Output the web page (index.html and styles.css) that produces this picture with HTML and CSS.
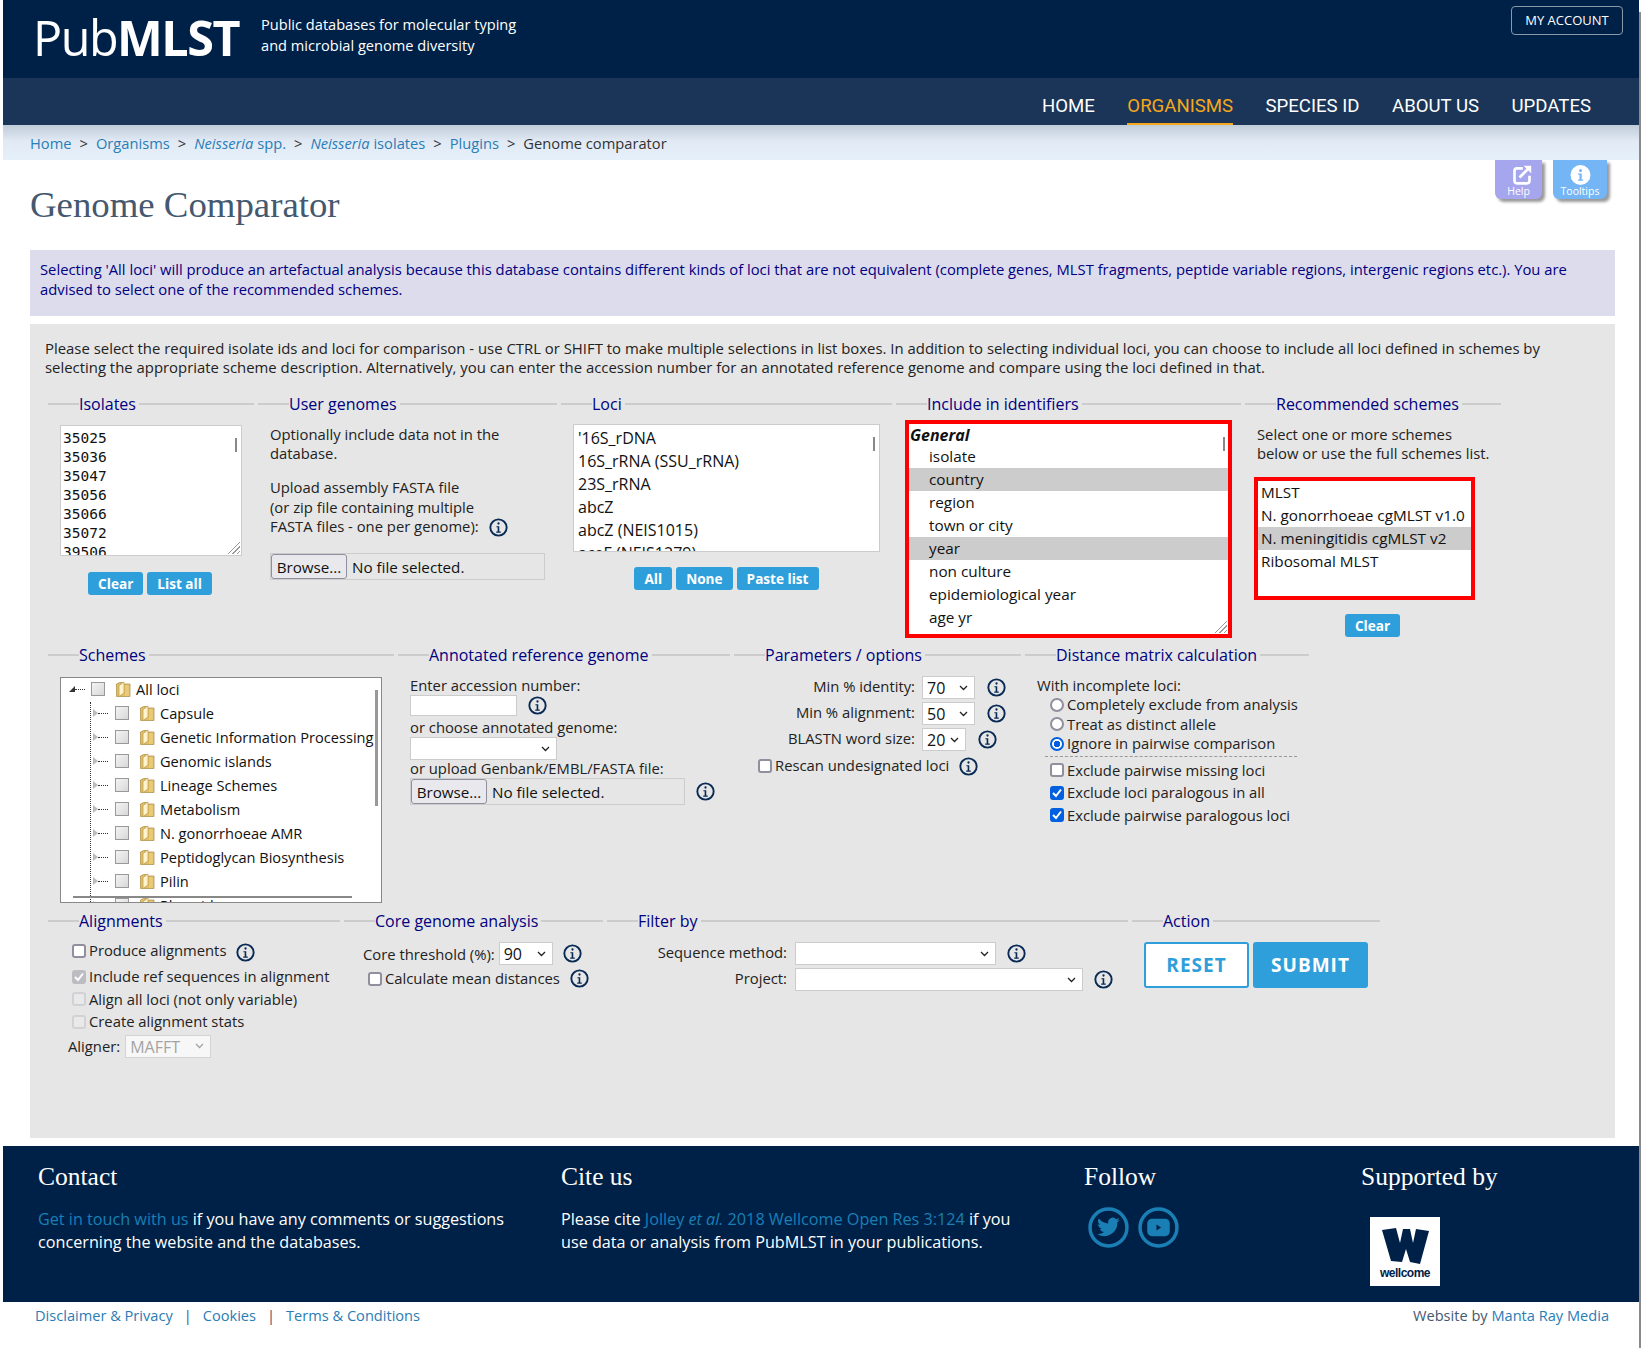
FILE: index.html
```html
<!doctype html>
<html lang="en">
  <head>
    <meta charset="UTF-8" />
    <title>PubMLST - Genome Comparator</title>
    <link rel="stylesheet" href="styles.css">
  </head>
  <body>
    <svg class="icon-defs" width="0" height="0">
      <symbol id="info" viewBox="0 0 20 20">
        <circle cx="10" cy="10" r="8.6" fill="none" stroke="currentColor" stroke-width="2" />
        <circle cx="10" cy="5.8" r="1.2" fill="currentColor" />
        <path d="M7.8 8.6h3v5.6h1.6v1.2H7.6v-1.2h1.5V9.8H7.8z" fill="currentColor" />
      </symbol>
      <symbol id="folder" viewBox="0 0 16 16">
        <path d="M1.5 15.5V3l3-1.5h3l1 1.5h6.5v12.5z" fill="#e3bd62" stroke="#a98c45" stroke-width=".7" />
        <path d="M4 15.5V4.5l5-3.5v11z" fill="#fdf3cf" stroke="#b89a50" stroke-width=".7" />
        <path d="M11 4v11M13 4v11" stroke="#f4dc9a" stroke-width=".8" />
      </symbol>
    </svg>

    <header class="site-header">
      <div class="brand">
        <div class="logo">Pub<b>MLST</b></div>
        <div class="tagline">Public databases for molecular typing<br>and microbial genome diversity</div>
        <a class="account-btn">MY ACCOUNT</a>
      </div>
      <nav class="main-nav">
        <a>HOME</a>
        <a class="active">ORGANISMS</a>
        <a>SPECIES ID</a>
        <a>ABOUT US</a>
        <a>UPDATES</a>
      </nav>
      <div class="breadcrumb">
        <a>Home</a><span class="sep">&gt;</span><a>Organisms</a><span class="sep">&gt;</span><a><i>Neisseria</i> spp.</a><span class="sep">&gt;</span><a><i>Neisseria</i> isolates</a><span class="sep">&gt;</span><a>Plugins</a><span class="sep">&gt;</span><span>Genome comparator</span>
      </div>
    </header>

    <main class="content">
      <div class="title-row">
        <h1>Genome Comparator</h1>
        <div class="page-tabs">
          <a class="page-tab help">
            <svg width="22" height="20" viewBox="0 0 24 24"><path d="M13 4H6a3 3 0 0 0-3 3v12a3 3 0 0 0 3 3h12a3 3 0 0 0 3-3v-6" fill="none" stroke="#fff" stroke-width="3.2" /><path d="M9 15 19 5" stroke="#fff" stroke-width="3.2" /><path d="M14 1h9v9z" fill="#fff" /></svg>
            Help
          </a>
          <a class="page-tab tips">
            <svg width="21" height="20" viewBox="0 0 20 20"><circle cx="10" cy="10" r="10" fill="#fff" /><circle cx="10" cy="5.4" r="1.5" fill="#73b5f5" /><path d="M7.6 8.4h3.6v6h1.4v1.3H7.6v-1.3h1.4V9.7H7.6z" fill="#73b5f5" /></svg>
            Tooltips
          </a>
        </div>
      </div>

      <div class="warn-box">Selecting 'All loci' will produce an artefactual analysis because this database contains different kinds of loci that are not equivalent (complete genes, MLST fragments, peptide variable regions, intergenic regions etc.). You are advised to select one of the recommended schemes.</div>

      <form class="panel">
        <p class="intro">Please select the required isolate ids and loci for comparison - use CTRL or SHIFT to make multiple selections in list boxes. In addition to selecting individual loci, you can choose to include all loci defined in schemes by selecting the appropriate scheme description. Alternatively, you can enter the accession number for an annotated reference genome and compare using the loci defined in that.</p>

        <div class="field-row row-one">
          <fieldset class="fs-isolates">
            <legend>Isolates</legend>
            <div class="listbox mono isolates-list">
              <div>35025</div><div>35036</div><div>35047</div><div>35056</div><div>35066</div><div>35072</div><div>39506</div>
              <span class="thumb"></span><span class="grip"></span>
            </div>
            <div class="btn-row">
              <button type="button" class="small-btn">Clear</button>
              <button type="button" class="small-btn">List all</button>
            </div>
          </fieldset>

          <fieldset class="fs-user">
            <legend>User genomes</legend>
            <p class="user-note">Optionally include data not in the<br>database.</p>
            <p class="user-upload">Upload assembly FASTA file<br>(or zip file containing multiple<br>FASTA files - one per genome): <svg class="info"><use href="#info" /></svg></p>
            <div class="file-box user-file"><button type="button">Browse...</button><span>No file selected.</span></div>
          </fieldset>

          <fieldset class="fs-loci">
            <legend>Loci</legend>
            <div class="listbox loci-list">
              <div>'16S_rDNA</div><div>16S_rRNA (SSU_rRNA)</div><div>23S_rRNA</div><div>abcZ</div><div>abcZ (NEIS1015)</div><div>aceF (NEIS1279)</div>
              <span class="thumb"></span>
            </div>
            <div class="btn-row">
              <button type="button" class="small-btn">All</button>
              <button type="button" class="small-btn">None</button>
              <button type="button" class="small-btn">Paste list</button>
            </div>
          </fieldset>

          <fieldset class="fs-include">
            <legend>Include in identifiers</legend>
            <div class="listbox red-box include-list">
              <div class="group">General</div>
              <div class="opt">isolate</div>
              <div class="opt picked">country</div>
              <div class="opt">region</div>
              <div class="opt">town or city</div>
              <div class="opt picked">year</div>
              <div class="opt">non culture</div>
              <div class="opt">epidemiological year</div>
              <div class="opt">age yr</div>
              <span class="thumb"></span><span class="grip"></span>
            </div>
          </fieldset>

          <fieldset class="fs-recommended">
            <legend>Recommended schemes</legend>
            <p class="rec-note">Select one or more schemes<br>below or use the full schemes list.</p>
            <div class="listbox red-box rec-list">
              <div>MLST</div>
              <div>N. gonorrhoeae cgMLST v1.0</div>
              <div class="picked">N. meningitidis cgMLST v2</div>
              <div>Ribosomal MLST</div>
            </div>
            <div class="btn-row rec-btns"><button type="button" class="small-btn">Clear</button></div>
          </fieldset>
        </div>

        <div class="field-row row-two">
          <fieldset class="fs-schemes">
            <legend>Schemes</legend>
            <div class="tree">
              <div class="tree-row root"><span class="tree-arrow open"></span><span class="dots"></span><span class="tree-check"></span><svg class="folder"><use href="#folder" /></svg>All loci</div>
              <div class="tree-row"><span class="tree-arrow"></span><span class="dots"></span><span class="tree-check"></span><svg class="folder"><use href="#folder" /></svg>Capsule</div>
              <div class="tree-row"><span class="tree-arrow"></span><span class="dots"></span><span class="tree-check"></span><svg class="folder"><use href="#folder" /></svg>Genetic Information Processing</div>
              <div class="tree-row"><span class="tree-arrow"></span><span class="dots"></span><span class="tree-check"></span><svg class="folder"><use href="#folder" /></svg>Genomic islands</div>
              <div class="tree-row"><span class="tree-arrow"></span><span class="dots"></span><span class="tree-check"></span><svg class="folder"><use href="#folder" /></svg>Lineage Schemes</div>
              <div class="tree-row"><span class="tree-arrow"></span><span class="dots"></span><span class="tree-check"></span><svg class="folder"><use href="#folder" /></svg>Metabolism</div>
              <div class="tree-row"><span class="tree-arrow"></span><span class="dots"></span><span class="tree-check"></span><svg class="folder"><use href="#folder" /></svg>N. gonorrhoeae AMR</div>
              <div class="tree-row"><span class="tree-arrow"></span><span class="dots"></span><span class="tree-check"></span><svg class="folder"><use href="#folder" /></svg>Peptidoglycan Biosynthesis</div>
              <div class="tree-row"><span class="tree-arrow"></span><span class="dots"></span><span class="tree-check"></span><svg class="folder"><use href="#folder" /></svg>Pilin</div>
              <div class="tree-row"><span class="tree-arrow"></span><span class="dots"></span><span class="tree-check"></span><svg class="folder"><use href="#folder" /></svg>Plasmid</div>
              <span class="tree-vline"></span><span class="tree-vbar"></span><span class="tree-hbar"></span>
            </div>
          </fieldset>

          <fieldset class="fs-annotated">
            <legend>Annotated reference genome</legend>
            <div class="ann-label ann-first">Enter accession number:</div>
            <div class="ann-line"><input type="text" class="accession"><svg class="info"><use href="#info" /></svg></div>
            <div class="ann-label ann-second">or choose annotated genome:</div>
            <select class="ann-select"><option></option></select>
            <div class="ann-label ann-third">or upload Genbank/EMBL/FASTA file:</div>
            <div class="ann-line"><div class="file-box ann-file"><button type="button">Browse...</button><span>No file selected.</span></div><svg class="info"><use href="#info" /></svg></div>
          </fieldset>

          <fieldset class="fs-params">
            <legend>Parameters / options</legend>
            <div class="param-row"><label>Min % identity:</label><select class="sel-wide"><option>70</option></select><svg class="info"><use href="#info" /></svg></div>
            <div class="param-row"><label>Min % alignment:</label><select class="sel-wide"><option>50</option></select><svg class="info"><use href="#info" /></svg></div>
            <div class="param-row"><label>BLASTN word size:</label><select class="sel-narrow"><option>20</option></select><svg class="info"><use href="#info" /></svg></div>
            <label class="check-line rescan"><input type="checkbox"> Rescan undesignated loci <svg class="info"><use href="#info" /></svg></label>
          </fieldset>

          <fieldset class="fs-distance">
            <legend>Distance matrix calculation</legend>
            <div class="dist-label">With incomplete loci:</div>
            <label class="radio-line"><input type="radio" name="inc"> Completely exclude from analysis</label>
            <label class="radio-line"><input type="radio" name="inc"> Treat as distinct allele</label>
            <label class="radio-line"><input type="radio" name="inc" checked> Ignore in pairwise comparison</label>
            <div class="dash"></div>
            <label class="check-line dist-check"><input type="checkbox"> Exclude pairwise missing loci</label>
            <label class="check-line dist-check"><input type="checkbox" checked> Exclude loci paralogous in all</label>
            <label class="check-line dist-check"><input type="checkbox" checked> Exclude pairwise paralogous loci</label>
          </fieldset>
        </div>

        <div class="field-row row-three">
          <fieldset class="fs-align">
            <legend>Alignments</legend>
            <label class="check-line al-first"><input type="checkbox"> Produce alignments <svg class="info"><use href="#info" /></svg></label>
            <label class="check-line al-item"><input type="checkbox" checked disabled> Include ref sequences in alignment</label>
            <label class="check-line al-item"><input type="checkbox" disabled> Align all loci (not only variable)</label>
            <label class="check-line al-item"><input type="checkbox" disabled> Create alignment stats</label>
            <div class="aligner"><label>Aligner:</label><select disabled><option>MAFFT</option></select></div>
          </fieldset>

          <fieldset class="fs-core">
            <legend>Core genome analysis</legend>
            <div class="core-line"><label>Core threshold (%):</label><select><option>90</option></select><svg class="info"><use href="#info" /></svg></div>
            <label class="check-line core-check"><input type="checkbox"> Calculate mean distances <svg class="info"><use href="#info" /></svg></label>
          </fieldset>

          <fieldset class="fs-filter">
            <legend>Filter by</legend>
            <div class="filter-row"><label>Sequence method:</label><select class="sel-method"><option></option></select><svg class="info"><use href="#info" /></svg></div>
            <div class="filter-row"><label>Project:</label><select class="sel-project"><option></option></select><svg class="info"><use href="#info" /></svg></div>
          </fieldset>

          <fieldset class="fs-action">
            <legend>Action</legend>
            <div class="action-btns">
              <button type="button" class="reset-btn">RESET</button>
              <button type="button" class="submit-btn">SUBMIT</button>
            </div>
          </fieldset>
        </div>
      </form>
    </main>

    <footer class="site-footer">
      <div class="foot-col contact">
        <h2>Contact</h2>
        <p><a>Get in touch with us</a> if you have any comments or suggestions concerning the website and the databases.</p>
      </div>
      <div class="foot-col cite">
        <h2>Cite us</h2>
        <p>Please cite <a>Jolley <i>et al.</i> 2018 Wellcome Open Res 3:124</a> if you use data or analysis from PubMLST in your publications.</p>
      </div>
      <div class="foot-col follow">
        <h2>Follow</h2>
        <div class="social">
          <svg width="41" height="41" viewBox="0 0 40 40"><circle cx="20" cy="20" r="18" fill="none" stroke="#1a7fb5" stroke-width="3.4" /><path d="M31 12.6a9 9 0 0 1-2.6.7 4.5 4.5 0 0 0 2-2.5 9 9 0 0 1-2.9 1.1 4.5 4.5 0 0 0-7.7 4.1 12.8 12.8 0 0 1-9.3-4.7 4.5 4.5 0 0 0 1.4 6 4.5 4.5 0 0 1-2-.6 4.5 4.5 0 0 0 3.6 4.5 4.5 4.5 0 0 1-2 .1 4.5 4.5 0 0 0 4.2 3.1A9 9 0 0 1 9 26.3a12.7 12.7 0 0 0 19.6-11.3 9 9 0 0 0 2.4-2.4z" fill="#1a7fb5" /></svg>
          <svg width="41" height="41" viewBox="0 0 40 40"><circle cx="20" cy="20" r="18" fill="none" stroke="#1a7fb5" stroke-width="3.4" /><rect x="9" y="11.5" width="22" height="17" rx="4.5" fill="#1a7fb5" /><path d="M18 17v6l4.5-3z" fill="#002147" /></svg>
        </div>
      </div>
      <div class="foot-col support">
        <h2>Supported by</h2>
        <div class="wellcome">
          <svg width="47" height="36" viewBox="0 0 47 36"><path d="M0 2 14 0 18 15 21 1 28 1 31 15 34 1 47 3 38 36 28 34 24 21 20 34 9 33z" fill="#002147" /></svg>
          <span>wellcome</span>
        </div>
      </div>
    </footer>

    <div class="bottom-bar">
      <div class="bottom-links"><a>Disclaimer &amp; Privacy</a><span>|</span><a>Cookies</a><span>|</span><a>Terms &amp; Conditions</a></div>
      <div class="credit">Website by <a>Manta Ray Media</a></div>
    </div>

    <span class="page-scroll"></span>
  </body>
</html>
```

FILE: styles.css
```css
* {
  box-sizing: border-box;
}

html {
  background: #fff;
}

body {
  margin: 0;
  padding: 0 5px 0 3px;
  position: relative;
  font-family: "Open Sans", "Noto Sans", sans-serif;
  font-size: 14px;
  color: #222;
  min-height: 1361px;
}

.icon-defs {
  position: absolute;
}

a {
  color: #2a7db5;
  text-decoration: none;
}

p {
  margin: 0;
}

/* header */
.site-header {
  background: #002147;
}

.brand {
  height: 78px;
  display: flex;
  align-items: flex-start;
  padding-left: 30px;
  color: #fff;
}

.logo {
  font-size: 48.5px;
  line-height: 74px;
  letter-spacing: -1.5px;
}

.logo b {
  font-weight: 700;
}

.tagline {
  margin: 14px 0 0 22px;
  font-size: 14.6px;
  line-height: 20.5px;
}

.account-btn {
  margin: 6px 16px 0 auto;
  width: 112px;
  height: 29px;
  border: 1px solid #8b98a8;
  border-radius: 4px;
  color: #fff;
  font-size: 13px;
  line-height: 27px;
  text-align: center;
}

.main-nav {
  height: 47px;
  background: #1a3557;
  display: flex;
  justify-content: flex-end;
  gap: 32.5px;
  padding-right: 48px;
}

.main-nav a {
  color: #fff;
  font-family: Roboto, sans-serif;
  font-size: 18.6px;
  line-height: 40px;
  padding-top: 8px;
}

.main-nav a.active {
  color: #f5a81c;
  border-bottom: 2px solid #f5a81c;
}

.breadcrumb {
  height: 35px;
  background: linear-gradient(#c0ccd8, #e0e9f4 45%, #e6f0fb);
  padding-left: 27px;
  font-size: 14.7px;
  line-height: 37px;
  color: #333;
}

.breadcrumb a {
  color: #2a7db5;
}

.sep {
  margin: 0 8px;
}

/* page */
.content {
  padding: 0 24px 0 27px;
}

.title-row {
  height: 90px;
  display: flex;
  justify-content: space-between;
}

h1 {
  margin: 0;
  padding-top: 22px;
  font-family: "Liberation Serif", serif;
  font-weight: 400;
  font-size: 36.8px;
  line-height: 46px;
  color: #44586f;
}

.page-tabs {
  display: flex;
  gap: 11px;
  margin-right: 8px;
}

.page-tab {
  height: 39px;
  border-radius: 0 0 6px 6px;
  box-shadow: 3px 3px 3px #999;
  color: #fff;
  font-size: 10.5px;
  line-height: 11px;
  text-align: center;
  display: flex;
  flex-direction: column;
  align-items: center;
}

.page-tab svg {
  display: block;
  margin: 5px 0 1px;
}

.page-tab.help {
  width: 47px;
  background: #a6a6ef;
}

.page-tab.help svg {
  margin-left: 6px;
}

.page-tab.tips {
  width: 54px;
  background: #73b5f5;
}

.warn-box {
  height: 66px;
  background: #dddcec;
  color: #000080;
  padding: 10px 10px 0;
  font-size: 14.8px;
  line-height: 19.5px;
}

.panel {
  margin-top: 8px;
  height: 814px;
  background: #e6e6e6;
  padding: 15px 15px 0 15px;
}

.intro {
  max-width: 1520px;
  font-size: 14.9px;
  line-height: 19px;
  color: #222;
}

.field-row {
  display: flex;
  align-items: flex-start;
  gap: 4px;
  margin-left: 3px;
}

fieldset {
  border: 0;
  border-top: 2px solid #ccc;
  margin: 0;
  padding: 0;
  min-width: 0;
  position: relative;
}

legend {
  margin-left: 31px;
  padding: 0 3px 0 0;
  font-size: 16px;
  line-height: 20px;
  color: #000080;
}

.row-one {
  margin-top: 17px;
  height: 251px;
}

.row-two {
  height: 266px;
}

.row-three {
  height: 200px;
}

.fs-isolates { width: 206px; }
.fs-user { width: 299px; }
.fs-loci { width: 331px; }
.fs-include { width: 345px; }
.fs-recommended { width: 256px; }
.fs-schemes { width: 346px; }
.fs-annotated { width: 332px; }
.fs-params { width: 287px; }
.fs-distance { width: 284px; }
.fs-align { width: 292px; }
.fs-core { width: 259px; }
.fs-filter { width: 521px; }
.fs-action { width: 248px; }

/* listboxes */
.listbox {
  position: relative;
  background: #fff;
  border: 1px solid #ccc;
  overflow: hidden;
  color: #111;
}

.thumb {
  position: absolute;
  top: 12px;
  right: 4px;
  width: 2px;
  height: 14px;
  background: #888;
}

.grip {
  position: absolute;
  right: 1px;
  bottom: 1px;
  width: 14px;
  height: 14px;
  background: repeating-linear-gradient(135deg, transparent 0 2px, #999 2px 3px);
  clip-path: polygon(100% 0, 100% 100%, 0 100%);
}

.mono {
  font-family: "DejaVu Sans Mono", monospace;
  font-size: 14.5px;
  line-height: 19px;
}

.isolates-list {
  margin: 11px 0 0 12px;
  width: 182px;
  height: 131px;
  padding: 3px 0 0 2px;
}

.btn-row {
  display: flex;
  gap: 4px;
  justify-content: center;
}

.small-btn {
  height: 23px;
  padding: 0 10px;
  border: 0;
  border-radius: 3px;
  background: #2f9fdb;
  color: #fff;
  font-family: inherit;
  font-size: 13.6px;
  font-weight: 700;
}

.fs-isolates .btn-row {
  margin: 16px 0 0 11px;
  width: 182px;
}

.user-note {
  margin: 11px 0 0 12px;
  font-size: 14.8px;
  line-height: 19px;
}

.user-upload {
  margin: 15px 0 0 12px;
  font-size: 14.8px;
  line-height: 19.5px;
}

.info {
  width: 19px;
  height: 19px;
  color: #082a55;
  vertical-align: -5px;
  flex: none;
}

.user-upload .info {
  margin-left: 6px;
}

.file-box {
  display: flex;
  align-items: center;
  height: 27px;
  border: 1px solid #ccc;
  background: #e6e6e6;
  font-size: 15.2px;
  color: #111;
}

.file-box button {
  height: 25px;
  width: 76px;
  padding: 0;
  border: 1px solid #8f8f9d;
  border-radius: 3px;
  background: #e9e9ed;
  font-family: inherit;
  font-size: 15.2px;
  color: #111;
  margin-right: 5px;
}

.user-file {
  margin: 16px 0 0 12px;
  width: 275px;
}

.loci-list {
  margin: 10px 0 0 12px;
  width: 307px;
  height: 128px;
  padding: 2px 0 0 4px;
  font-size: 16px;
  line-height: 23px;
}

.fs-loci .btn-row {
  margin: 15px 0 0 12px;
  width: 307px;
}

.red-box {
  border: 4px solid #ff0000;
}

.include-list {
  margin: 6px 0 0 9px;
  width: 327px;
  height: 218px;
  font-size: 15.3px;
  line-height: 23px;
}

.include-list .group {
  font-size: 16px;
  font-weight: 700;
  font-style: italic;
  padding-left: 1px;
  line-height: 20px;
  margin-top: 1px;
}

.include-list .opt {
  padding-left: 20px;
}

.picked {
  background: #ccc;
}

.include-list .thumb {
  top: 13px;
  right: 3px;
}

.rec-note {
  margin: 11px 0 0 12px;
  font-size: 14.8px;
  line-height: 19px;
}

.rec-list {
  margin: 14px 0 0 9px;
  width: 221px;
  height: 123px;
  font-size: 15.3px;
  line-height: 23px;
  white-space: nowrap;
}

.rec-list div {
  padding-left: 3px;
}

.rec-btns {
  margin: 14px 0 0 17px;
  width: 221px;
}

/* tree */
.tree {
  position: relative;
  margin: 12px 0 0 12px;
  width: 322px;
  height: 226px;
  background: #fff;
  border: 1px solid #888;
  overflow: hidden;
}

.tree-row {
  height: 24px;
  display: flex;
  align-items: center;
  font-size: 14.6px;
  padding-left: 32px;
  color: #111;
}

.tree-row.root {
  padding-left: 8px;
  margin-top: -1px;
}

.tree-arrow {
  width: 0;
  height: 0;
  border-style: solid;
  border-width: 4px 0 4px 5px;
  border-color: transparent transparent transparent #bbb;
  flex: none;
}

.tree-arrow.open {
  border-width: 0 0 6px 6px;
  border-color: transparent transparent #333 transparent;
}

.dots {
  width: 10px;
  border-top: 1px dotted #333;
  margin-right: 7px;
  flex: none;
}

.root .dots {
  margin-right: 6px;
}

.tree-check {
  width: 14px;
  height: 14px;
  border: 1px solid #999;
  background: linear-gradient(135deg, #f4f4f4, #d8d8d8);
  margin-right: 10px;
  flex: none;
}

.folder {
  width: 16px;
  height: 16px;
  margin-right: 5px;
  flex: none;
}

.tree-vline {
  position: absolute;
  left: 29px;
  top: 24px;
  bottom: 0;
  border-left: 1px dotted #333;
}

.tree-vbar {
  position: absolute;
  right: 3px;
  top: 12px;
  width: 3px;
  height: 116px;
  background: #999;
}

.tree-hbar {
  position: absolute;
  left: 12px;
  bottom: 4px;
  width: 279px;
  height: 2px;
  background: #888;
}

/* annotated */
.fs-annotated {
  padding-left: 12px;
  font-size: 14.8px;
}

.fs-annotated legend {
  margin-left: 19px;
}

.ann-label {
  line-height: 19px;
}

.ann-first {
  margin-top: 11px;
}

.ann-second {
  margin-top: 2px;
}

.ann-third {
  margin-top: -1px;
}

.ann-line {
  display: flex;
  align-items: center;
  gap: 11px;
}

select {
  appearance: none;
  height: 23px;
  padding: 0 0 0 4px;
  border: 1px solid #ccc;
  background: #fff url("data:image/svg+xml,%3Csvg xmlns='http://www.w3.org/2000/svg' width='9' height='6'%3E%3Cpath d='M1 1l3.5 3.5L8 1' fill='none' stroke='%23222' stroke-width='1.3'/%3E%3C/svg%3E") no-repeat right 6px center;
  font-family: inherit;
  font-size: 16px;
  color: #111;
  border-radius: 0;
}

select:disabled {
  color: #888;
  background-image: url("data:image/svg+xml,%3Csvg xmlns='http://www.w3.org/2000/svg' width='9' height='6'%3E%3Cpath d='M1 1l3.5 3.5L8 1' fill='none' stroke='%23888' stroke-width='1.3'/%3E%3C/svg%3E");
}

input[type="text"] {
  border: 1px solid #ccc;
  background: #fff;
}

.accession {
  width: 107px;
  height: 21px;
}

.ann-select {
  display: block;
  width: 147px;
}

.ann-file {
  width: 275px;
}

/* params */
.param-row {
  display: flex;
  align-items: center;
  height: 23px;
  margin-bottom: 3px;
  font-size: 14.8px;
}

.param-row:first-of-type {
  margin-top: 11px;
}

.param-row label {
  width: 181px;
  text-align: right;
  margin: 0 7px 3px 0;
}

.sel-wide {
  width: 53px;
  margin-right: 12px;
}

.sel-narrow {
  width: 44px;
  margin-right: 12px;
}

.check-line {
  display: flex;
  align-items: center;
  height: 19px;
  font-size: 14.8px;
  line-height: 19px;
}

input[type="checkbox"],
input[type="radio"] {
  appearance: none;
  margin: 0 3px 0 0;
  width: 14px;
  height: 14px;
  flex: none;
  border: 2px solid #8f8f9d;
  background: #fff;
}

input[type="checkbox"] {
  border-radius: 3px;
}

input[type="radio"] {
  border-radius: 50%;
}

input[type="radio"]:checked {
  border-color: #0060df;
  background: radial-gradient(circle, #0060df 0 3px, #fff 3.5px);
}

input[type="checkbox"]:checked {
  border-color: #0060df;
  background: #0060df url("data:image/svg+xml,%3Csvg xmlns='http://www.w3.org/2000/svg' width='10' height='10'%3E%3Cpath d='M1 5l3 3 5-6.5' fill='none' stroke='%23fff' stroke-width='2'/%3E%3C/svg%3E") no-repeat center;
}

input[type="checkbox"]:disabled {
  border-color: #d2d2d6;
  background-color: #e9e9ea;
}

input[type="checkbox"]:checked:disabled {
  border-color: #bcbcc2;
  background-color: #bcbcc2;
}

.rescan {
  margin: 5px 0 0 24px;
}

.rescan .info {
  margin: 2px 0 0 10px;
}

.dist-label {
  margin: 11px 0 0 12px;
  font-size: 14.8px;
  line-height: 19px;
}

.radio-line {
  display: flex;
  align-items: center;
  margin-left: 25px;
  font-size: 14.8px;
  line-height: 19.5px;
}

.dash {
  margin: 2px 12px 4px 20px;
  border-top: 1px dashed #999;
}

.dist-check {
  margin: 0 0 3px 25px;
  height: 19.5px;
  line-height: 19.5px;
}

/* alignments */
.al-first {
  margin: 10px 0 7px 24px;
}

.al-first .info {
  margin: 4px 0 0 10px;
}

.al-item {
  margin: 0 0 3.5px 24px;
}

.aligner {
  display: flex;
  align-items: center;
  gap: 5px;
  margin-left: 20px;
  font-size: 14.8px;
}

.aligner select {
  width: 86px;
}

.core-line {
  display: flex;
  align-items: center;
  margin: 11px 0 0 19px;
  font-size: 14.8px;
}

.core-line label {
  margin-right: 4px;
}

.core-line select {
  width: 54px;
  margin-right: 10px;
}

.core-check {
  margin: 4px 0 0 24px;
}

.core-check .info {
  margin-left: 10px;
}

.filter-row {
  display: flex;
  align-items: center;
  height: 23px;
  margin-bottom: 3px;
  font-size: 14.8px;
}

.filter-row:first-of-type {
  margin-top: 11px;
}

.filter-row label {
  width: 180px;
  text-align: right;
  margin: 0 8px 4px 0;
}

.sel-method {
  width: 201px;
  margin-right: 11px;
}

.sel-project {
  width: 288px;
  margin-right: 11px;
}

.action-btns {
  display: flex;
  gap: 4px;
  margin: 11px 0 0 12px;
}

.reset-btn,
.submit-btn {
  height: 46px;
  border-radius: 3px;
  font-family: inherit;
  font-size: 19px;
  font-weight: 700;
  letter-spacing: 1px;
}

.reset-btn {
  width: 105px;
  border: 2px solid #2f9fdb;
  background: #fff;
  color: #2f9fdb;
}

.submit-btn {
  width: 115px;
  border: 0;
  background: #2f9fdb;
  color: #fff;
}

/* footer */
.site-footer {
  margin-top: 8px;
  height: 156px;
  background: #002147;
  color: #fff;
  display: flex;
  font-size: 16.2px;
  line-height: 23px;
}

.foot-col h2 {
  margin: 14px 0 0;
  font-family: "Liberation Serif", serif;
  font-weight: 400;
  font-size: 25.5px;
  line-height: 34px;
}

.foot-col p {
  margin-top: 14px;
}

.foot-col a {
  color: #1a7fb5;
}

.contact {
  width: 523px;
  padding-left: 35px;
}

.cite {
  width: 523px;
  padding-left: 35px;
}

.cite p {
  max-width: 465px;
}

.follow {
  width: 277px;
  padding-left: 35px;
}

.support {
  padding-left: 35px;
}

.social {
  display: flex;
  gap: 9px;
  margin: 13px 0 0 4px;
}

.wellcome {
  margin: 23px 0 0 9px;
  width: 70px;
  height: 69px;
  background: #fff;
  display: flex;
  flex-direction: column;
  align-items: center;
  padding-top: 11px;
  color: #002147;
}

.wellcome span {
  font-family: "Liberation Sans", sans-serif;
  font-size: 12px;
  font-weight: 700;
  line-height: 12px;
  letter-spacing: -.5px;
  margin-top: 3px;
}

.bottom-bar {
  display: flex;
  justify-content: space-between;
  padding: 3px 30px 0 32px;
  font-size: 14.6px;
  line-height: 20px;
  color: #44586f;
}

.bottom-links span {
  margin: 0 11px;
}

.page-scroll {
  position: absolute;
  top: 12px;
  right: 3px;
  width: 2px;
  height: 1336px;
  background: #8a8a8a;
}
```
